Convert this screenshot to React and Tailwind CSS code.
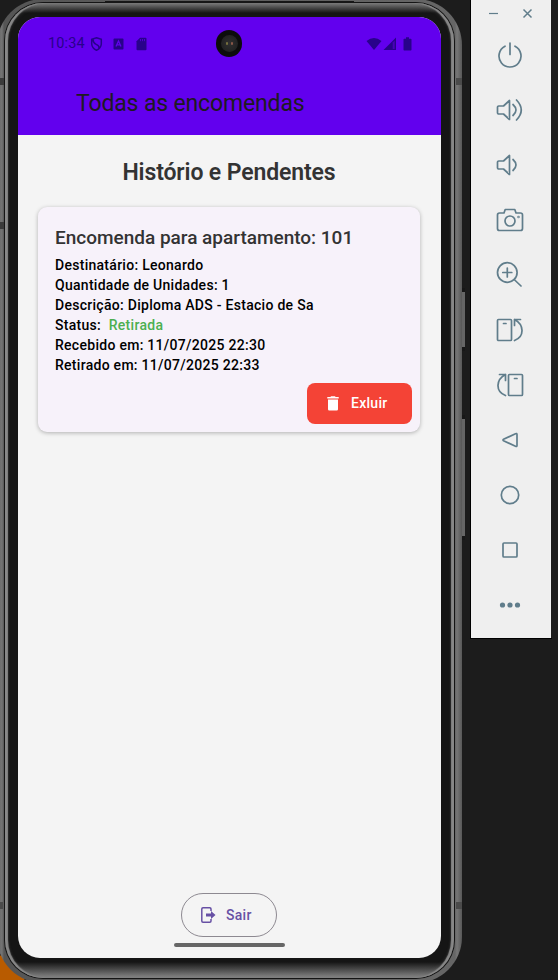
import React from 'react';

const details = [
  'Destinatário: Leonardo',
  'Quantidade de Unidades: 1',
  'Descrição: Diploma ADS - Estacio de Sa',
  'status',
  'Recebido em: 11/07/2025 22:30',
  'Retirado em: 11/07/2025 22:33',
];

const toolIcons = [
  <path key="power" d="M10 6.200a11 11 0 1 0 10 0M15 3v11.500" />,
  <g key="up"><path d="M14.500 5.500v19l-6-5.500H3.800a1.300 1.300 0 0 1-1.300-1.300v-5.400A1.300 1.300 0 0 1 3.800 11h4.700z" /><path d="M18 9.500q6 5.500 0 11M21.500 5q9.500 10 0 20" /></g>,
  <g key="down"><path d="M14.500 5.500v19l-6-5.500H3.800a1.300 1.300 0 0 1-1.300-1.300v-5.400A1.300 1.300 0 0 1 3.800 11h4.700z" /><path d="M18 9.500q6 5.500 0 11" /></g>,
  <g key="camera"><path d="M4.500 8H9l1.200-3.500h9.600L21 8h4.500a2 2 0 0 1 2 2v13.500a2 2 0 0 1-2 2h-21a2 2 0 0 1-2-2V10a2 2 0 0 1 2-2z" /><circle cx="15" cy="16" r="5" /><circle cx="23.500" cy="12" r=".4" /></g>,
  <g key="zoom"><circle cx="12.300" cy="12.500" r="9.800" /><path d="M12.300 8v9M7.800 12.500h9M19.200 19.500l6.800 6.500" /></g>,
  <g key="left"><rect x="2.500" y="4.500" width="14" height="21" rx="1" /><path d="M8.500 8.500h2.500M25.500 4.500h-6v6M19.500 4.500c9.500 5 10.500 17 0 21" /></g>,
  <g key="right"><rect x="13.500" y="4.500" width="14" height="21" rx="1" /><path d="M19.500 8.500h2.500M4.500 4.500h6v6M10.500 4.500c-9.500 5-10.500 17 0 21" /></g>,
  <path key="back" d="M20.500 8.700q1.500-.7 1.500.8v11q0 1.500-1.500.8L8.500 15.700q-1-.7 0-1.400z" />,
  <circle key="home" cx="15" cy="15" r="8.700" />,
  <rect key="recent" x="8" y="8" width="14" height="14" rx="1" />,
  <g key="more" fill="currentColor" stroke="none"><circle cx="7.500" cy="15" r="2.600" /><circle cx="15" cy="15" r="2.600" /><circle cx="22.500" cy="15" r="2.600" /></g>,
];

function StatusBar() {
  return (
    <div className="relative flex h-[53px] items-center pl-[30px] pr-[29px] text-[#28028b]">
      <span className="w-[38px] whitespace-nowrap text-[14.500px] tracking-[0.150px]">10:34</span>
      <svg className="ml-[4px]" width="14" height="16" viewBox="0 0 14 16" fill="none" stroke="currentColor" strokeWidth="1.500">
        <path d="M6.500 1.700l4.800 1.600V8q-.3 4.300-4.800 6.200Q2 12.300 1.700 8V3.300zM3 3.500q.3 3.800 3.200 4.900t3 4" />
      </svg>
      <svg className="ml-[9px]" width="11" height="12" viewBox="0 0 11 12">
        <rect x=".5" y=".5" width="10" height="11" rx="1" fill="currentColor" />
        <path d="M3 8.500l2.500-5.500L8 8.500M4 6.800h3" fill="none" stroke="#6200ee" strokeWidth="1.300" />
      </svg>
      <svg className="ml-[12px]" width="11" height="14" viewBox="0 0 11 14">
        <path d="M4 .7h5.500a1 1 0 0 1 1 1v10.600a1 1 0 0 1-1 1H1.500a1 1 0 0 1-1-1V4.200z" fill="currentColor" />
        <path d="M4.500 2v2.200M6.500 2v2.200M8.500 2v2.200" stroke="#6200ee" strokeWidth=".7" />
      </svg>
      <svg className="ml-auto" width="16" height="14" viewBox="0 0 16 14" fill="currentColor">
        <path d="M.5 4Q8-2 15.500 4L8 13z" />
      </svg>
      <svg className="ml-[1px]" width="14" height="14" viewBox="0 0 14 14">
        <path d="M.5 13L13 .5V13z" fill="currentColor" />
        <path d="M9.700 5.500v6.500h2V3.500z" fill="#4a02b8" />
      </svg>
      <svg className="ml-[6px]" width="9" height="14" viewBox="0 0 9 14" fill="currentColor">
        <path d="M3 .3h3v1.400h1.700q.8 0 .8.800v10q0 1-.8 1H1.300q-.8 0-.8-1v-10q0-.8.8-.8H3z" />
      </svg>
      <div className="absolute left-[198px] top-[13px] flex h-[27px] w-[26px] items-center justify-center rounded-full bg-[#0c0c0c]">
        <div className="flex h-[17px] w-[17px] items-center justify-center gap-[3px] rounded-full bg-[radial-gradient(circle,#303030,#1c1c1c)]">
          <span className="h-[3px] w-[2px] rounded-full bg-[#77703e]" />
          <span className="h-[3px] w-[2px] rounded-full bg-[#8a5848]" />
        </div>
      </div>
    </div>
  );
}

function PackageCard() {
  return (
    <section className="ml-5 mr-[21px] mt-[18px] flex h-[225px] flex-col rounded-[9px] bg-[#f7f2fa] pl-[17px] pr-[8px] pt-[18px] shadow-[0_1px_4px_rgba(0,0,0,0.28)]">
      <h2 className="h-[30px] whitespace-nowrap text-[19px] font-medium leading-[26px] tracking-[-0.010px] text-[#333]">Encomenda para apartamento: 101</h2>
      {details.map((line) => (
        <p key={line} className="h-5 whitespace-nowrap text-[14px] font-medium leading-5 tracking-[0.280px] text-black">
          {line === 'status' ? <>Status: <span className="ml-[4px] text-[#4caf50]">Retirada</span></> : line}
        </p>
      ))}
      <button className="ml-auto mt-[8px] flex h-[41px] w-[105px] items-center rounded-[8px] bg-[#f44336] pl-[20px] text-[14px] font-medium tracking-[0.280px] text-white">
        <svg width="12" height="15" viewBox="0 0 12 15" fill="currentColor">
          <path d="M.3 1h3l.8-.8h3.800l.8.800h3v1.500H.3zM1 3.500h10v9.700q0 1.300-1.300 1.300H2.300Q1 14.500 1 13.200z" />
        </svg>
        <span className="ml-[12px]">Exluir</span>
      </button>
    </section>
  );
}

function Screen() {
  return (
    <main className="flex h-[941px] w-[423px] flex-col overflow-hidden rounded-[22px] bg-[#f4f4f4]">
      <header className="h-[118px] shrink-0 bg-[#6200ee]">
        <StatusBar />
        <div className="whitespace-nowrap pl-[58px] pt-[18px] text-[23px] leading-[32px] tracking-[-0.150px] text-[#1d1b20]">Todas as encomendas</div>
      </header>
      <h1 className="mr-px mt-[22px] whitespace-nowrap text-center text-[23px] font-semibold leading-[32px] tracking-[-0.120px] text-[#333]">Histório e Pendentes</h1>
      <PackageCard />
      <div className="mt-auto flex shrink-0 flex-col items-center pr-px">
        <button className="flex h-[44px] w-[96px] items-center rounded-full border border-[#8d8991] pl-[18px] text-[14px] font-medium tracking-[0.280px] text-[#6750a4]">
          <svg width="16" height="18" viewBox="0 0 16 18">
            <path d="M11 5V3q0-1.200-1.200-1.200H3Q1.800 1.800 1.800 3v12q0 1.200 1.200 1.200h6.800Q11 16.200 11 15v-2" fill="none" stroke="currentColor" strokeWidth="1.500" />
            <path d="M6 7.500h5V5l4.500 4-4.500 4v-2.500H6z" fill="currentColor" />
          </svg>
          <span className="ml-[10px]">Sair</span>
        </button>
        <div className="mb-[11px] mt-[6px] h-[4px] w-[111px] rounded-full bg-[#666]" />
      </div>
    </main>
  );
}

function Phone() {
  return (
    <div className="relative -ml-[3px] -mt-px h-[984px] w-[465px] shrink-0 rounded-[46px] bg-[linear-gradient(90deg,#666,#747474_5px,#555_7px,#666_458px,#777_460px,#585858)] px-[7px] pb-[4px] pt-[3px]">
      <div className="h-[977px] rounded-[39px] bg-[#151515] p-px">
        <div className="h-[975px] rounded-[38px] bg-[linear-gradient(180deg,#777,#151515_10px,#151515_959px,#888)] px-[13px] pt-[14px] shadow-[inset_3px_0_1px_#888,inset_-3px_0_1px_#888,inset_0_0_5px_#777]">
          <Screen />
        </div>
      </div>
      <span className="absolute left-[108px] right-[108px] top-[2px] h-[2px] bg-[#171717]" />
      <span className="absolute left-[3px] top-[79px] h-[7px] w-[4px] bg-[#3b3b3b]" />
      <span className="absolute left-[3px] top-[223px] h-[7px] w-[4px] bg-[#3b3b3b]" />
      <span className="absolute right-0 top-[79px] h-[7px] w-[6px] bg-[#4b4b4b]" />
      <span className="absolute bottom-[74px] left-[3px] h-[7px] w-[3px] bg-[#4b4b4b]" />
      <span className="absolute bottom-[74px] right-0 h-[7px] w-[6px] bg-[#4b4b4b]" />
      <span className="absolute -right-[3px] top-[289px] h-[63px] w-[3px] border-y-4 border-[#171717] bg-[#666]" />
      <span className="absolute -right-[3px] top-[416px] h-[125px] w-[3px] border-y-4 border-[#171717] bg-[#666]" />
    </div>
  );
}

export default function App() {
  return (
    <div className="flex h-[980px] w-[558px] overflow-hidden bg-[#1c1c1c] bg-[radial-gradient(circle_at_0_980px,#b85b00_0_24px,#1c1c1c_25px)] font-['Roboto',sans-serif]">
      <Phone />
      <aside className="ml-[8px] h-[639px] w-[82px] shrink-0 border-b border-l border-black bg-[#efefef] pr-px text-[#607d8b] shadow-[inset_-1px_0_#1c1c1c]">
        <div className="flex h-[27px] items-center">
          <svg className="ml-[17px]" width="11" height="11" viewBox="0 0 11 11" stroke="currentColor" strokeWidth="1.200"><path d="M1 5.500h9" /></svg>
          <svg className="ml-[23px]" width="11" height="11" viewBox="0 0 11 11" stroke="currentColor" strokeWidth="1.500"><path d="M1.500 1.500l8 8M9.500 1.500l-8 8" /></svg>
        </div>
        {toolIcons.map((icon, i) => (
          <div key={i} className="flex h-[55px] items-center pl-[24px]">
            <svg width="30" height="30" viewBox="0 0 30 30" fill="none" stroke="currentColor" strokeWidth="1.700" strokeLinecap="round" strokeLinejoin="round">{icon}</svg>
          </div>
        ))}
      </aside>
    </div>
  );
}
